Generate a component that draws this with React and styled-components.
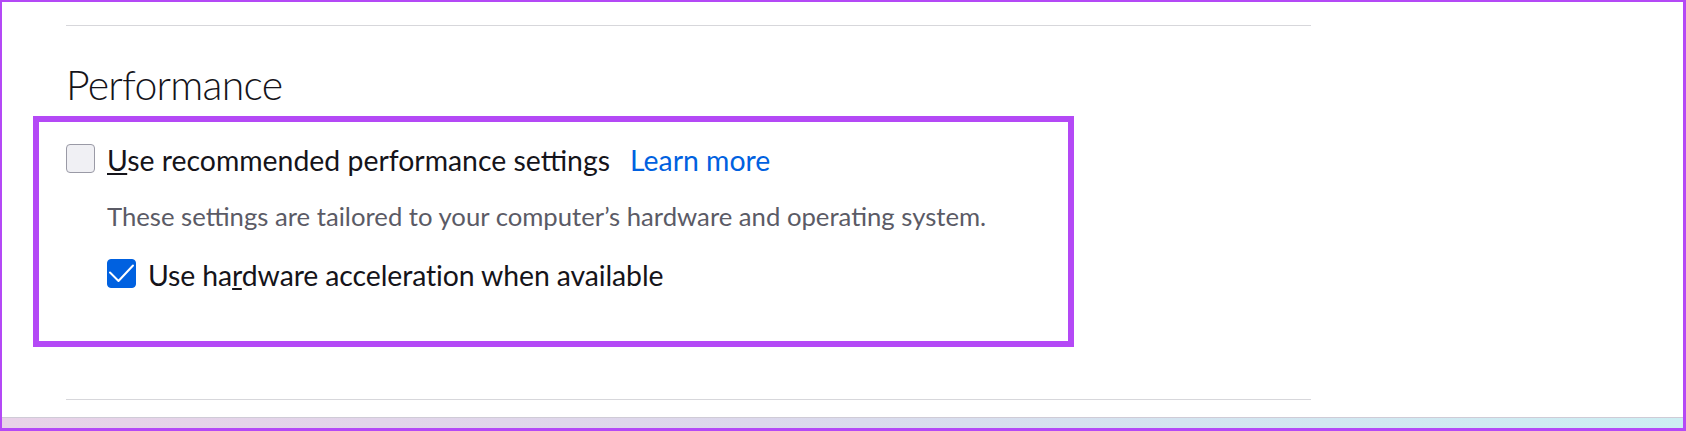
import React from "react";
import styled, { createGlobalStyle } from "styled-components";

const GlobalStyle = createGlobalStyle`
  html, body { margin: 0; padding: 0; background: #fff; }
  body { font-family: Lato, "Open Sans", sans-serif; }
`;

const Frame = styled.div`
  box-sizing: border-box;
  width: 1686px;
  height: 431px;
  border-style: solid;
  border-color: #b449f6;
  border-width: 2px 3px 3px 2px;
  display: flex;
  flex-direction: column;
  background: #fff;
`;

const Column = styled.div`
  flex: 1;
  display: flex;
  flex-direction: column;
  padding-left: 31px;
`;

const Separator = styled.div`
  margin-left: 33px;
  width: 1245px;
  height: 1px;
  background: #d7d7db;
  margin-top: ${(p) => p.$top}px;
`;

const Heading = styled.h1`
  margin: 34px 0 0 33px;
  font-family: Lato, sans-serif;
  font-weight: 300;
  font-size: 41px;
  letter-spacing: -0.75px;
  line-height: 50px;
  color: #15141a;
`;

const Highlight = styled.section`
  box-sizing: border-box;
  margin-top: 6px;
  width: 1041px;
  height: 231px;
  border: 6px solid #b449f6;
  padding: 22px 0 0 27px;
  display: flex;
  flex-direction: column;
`;

const Row = styled.label`
  display: flex;
  align-items: flex-start;
  gap: 12px;
  margin-left: ${(p) => p.$indent || 0}px;
  margin-top: ${(p) => p.$top || 0}px;
  cursor: default;
`;

const Box = styled.span`
  box-sizing: border-box;
  flex: none;
  width: 29px;
  height: 29px;
  border-radius: 4px;
  border: 1px solid ${(p) => (p.$checked ? "#0061e0" : "#9a9aa6")};
  background: ${(p) => (p.$checked ? "#0061e0" : "#f0f0f4")};
  display: flex;
  align-items: center;
  justify-content: center;
`;

const Label = styled.span`
  font-family: Lato, sans-serif;
  font-size: 28.4px;
  letter-spacing: ${(p) => p.$tracking || 0}px;
  line-height: 29px;
  padding-top: 2px;
  color: #15141a;
  white-space: nowrap;
`;

const Key = styled.span`
  text-decoration: underline;
  text-decoration-thickness: 1.5px;
  text-underline-offset: 2px;
`;

const Link = styled.a`
  margin-left: 20px;
  color: #0061e0;
  text-decoration: none;
`;

const Description = styled.p`
  margin: 26px 0 0 41px;
  font-family: Lato, sans-serif;
  font-size: 25.7px;
  line-height: 30px;
  color: #5b5b66;
  white-space: nowrap;
`;

const Strip = styled.div`
  height: 11px;
  box-sizing: border-box;
  background: linear-gradient(90deg, #e8d2e8 0%, #dcd8ec 45%, #d4e4f0 70%, #cdeef3 100%);
  border-top: 1px solid #cfcbd6;
`;

function Checkmark() {
  return (
    <svg width="27" height="27" viewBox="0 0 27 27" fill="none">
      <path
        d="M2 12.5 L10.5 21 L25 5.5"
        stroke="#fff"
        strokeWidth="2"
        strokeLinecap="round"
        strokeLinejoin="round"
      />
    </svg>
  );
}

export default function App() {
  return (
    <>
      <GlobalStyle />
      <Frame>
        <Column>
          <Separator $top={23} />
          <Heading>Performance</Heading>
          <Highlight>
            <Row>
              <Box />
              <Label>
                <Key>U</Key>se recommended performance settings
                <Link href="#">Learn more</Link>
              </Label>
            </Row>
            <Description>
              These settings are tailored to your computer’s hardware and operating system.
            </Description>
            <Row $indent={41} $top={28}>
              <Box $checked>
                <Checkmark />
              </Box>
              <Label $tracking={-0.1}>
                Use ha<Key>r</Key>dware acceleration when available
              </Label>
            </Row>
          </Highlight>
          <Separator $top={52} />
        </Column>
        <Strip />
      </Frame>
    </>
  );
}
